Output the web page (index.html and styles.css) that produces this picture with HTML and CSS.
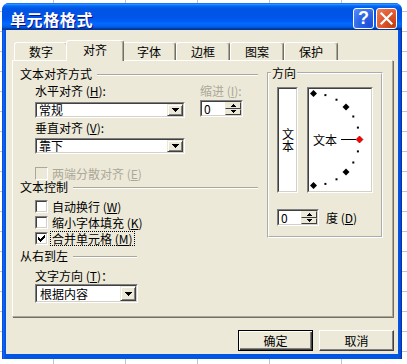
FILE: index.html
```html
<!DOCTYPE html>
<html lang="zh-CN">
<head>
<meta charset="utf-8">
<title>单元格格式</title>
<link rel="stylesheet" href="styles.css">
</head>
<body>
<div class="window">
  <div class="titlebar">
    <span class="title">单元格格式</span>
    <div class="tbtns">
      <div class="tbtn help">?</div>
      <div class="tbtn close">
        <svg width="19" height="19" viewBox="0 0 19 19"><path d="M4.5 4.5L14.5 14.5M14.5 4.5L4.5 14.5" stroke="#fff" stroke-width="2.2" stroke-linecap="square"/></svg>
      </div>
    </div>
  </div>
  <div class="frame">
    <div class="client">
      <div class="tabs">
        <div class="tab">数字</div>
        <div class="tab sel">对齐</div>
        <div class="tab">字体</div>
        <div class="tab">边框</div>
        <div class="tab">图案</div>
        <div class="tab">保护</div>
      </div>
      <div class="panel">
        <div class="leftcol">
          <div class="sechead"><span>文本对齐方式</span><i class="rule"></i></div>
          <div class="alignrow">
            <div class="acol">
              <div class="lbl">水平对齐 (<u>H</u>):</div>
              <div class="sunk combo">
                <div class="in"><span class="val">常规</span><span class="ddbtn"><svg width="7" height="4" viewBox="0 0 7 4"><path d="M0 0h7v1h-1v1h-1v1h-1v1h-1v-1h-1v-1h-1v-1h-1z"/></svg></span></div>
              </div>
              <div class="lbl mt3">垂直对齐 (<u>V</u>):</div>
              <div class="sunk combo mt3b">
                <div class="in"><span class="val">靠下</span><span class="ddbtn"><svg width="7" height="4" viewBox="0 0 7 4"><path d="M0 0h7v1h-1v1h-1v1h-1v1h-1v-1h-1v-1h-1v-1h-1z"/></svg></span></div>
              </div>
            </div>
            <div class="indcol">
              <div class="lbl dis">缩进 (<u>I</u>):</div>
              <div class="sunk spin ind-spin">
                <div class="in"><span class="val">0</span>
                  <span class="spbtns">
                    <span class="spb"><svg width="5" height="3" viewBox="0 0 5 3"><path d="M2 0h1v1h1v1h1v1h-5v-1h1v-1h1z"/></svg></span>
                    <span class="spb"><svg width="5" height="3" viewBox="0 0 5 3"><path d="M0 0h5v1h-1v1h-1v1h-1v-1h-1v-1h-1z"/></svg></span>
                  </span>
                </div>
              </div>
            </div>
          </div>
          <div class="chk chk-dis">
            <span class="sunk cb"><span class="in"></span></span>
            <span class="clbl">两端分散对齐 (<u>E</u>)</span>
          </div>
          <div class="sechead"><span>文本控制</span><i class="rule"></i></div>
          <div class="chk chk-first">
            <span class="sunk cb"><span class="in"></span></span>
            <span class="clbl">自动换行 (<u>W</u>)</span>
          </div>
          <div class="chk">
            <span class="sunk cb"><span class="in"></span></span>
            <span class="clbl">缩小字体填充 (<u>K</u>)</span>
          </div>
          <div class="chk">
            <span class="sunk cb"><span class="in"><svg width="7" height="7" viewBox="0 0 7 7"><path d="M0 2h1v1h1v1h1v-1h1v-1h1v-1h1v-1h1v3h-1v1h-1v1h-1v1h-1v1h-1v-1h-1v-1h-1z"/></svg></span></span>
            <span class="clbl focus">合并单元格 (<u>M</u>)</span>
          </div>
          <div class="sechead short mt2"><span>从右到左</span><i class="rule"></i></div>
          <div class="lbl ind mt6">文字方向 (<u>T</u>)：</div>
          <div class="sunk combo tall ind mt1">
            <div class="in"><span class="val">根据内容</span><span class="ddbtn"><svg width="7" height="4" viewBox="0 0 7 4"><path d="M0 0h7v1h-1v1h-1v1h-1v1h-1v-1h-1v-1h-1v-1h-1z"/></svg></span></div>
          </div>
        </div>
        <fieldset class="dir">
          <legend>方向</legend>
          <div class="dirboxes">
            <div class="sunk vbox"><div class="in"><span class="vtext">文本</span></div></div>
            <div class="sunk dialbox">
              <div class="in">
                <svg width="62" height="102" viewBox="0 0 62 102">
                  <text x="4" y="56" class="dialtext">文本</text>
                  <rect x="32" y="50" width="15" height="1" fill="#000"/>
                  <g fill="#000">
                    <rect x="15.4" y="5.1" width="2" height="2"/>
                    <rect x="26.5" y="9.7" width="2" height="2"/>
                    <rect x="43.3" y="26.5" width="2" height="2"/>
                    <rect x="47.9" y="37.6" width="2" height="2"/>
                    <rect x="47.9" y="61.4" width="2" height="2"/>
                    <rect x="43.3" y="72.5" width="2" height="2"/>
                    <rect x="26.5" y="89.3" width="2" height="2"/>
                    <rect x="15.4" y="93.9" width="2" height="2"/>
                    <path d="M4.5 1L8 4.5L4.5 8L1 4.5Z"/>
                    <path d="M37 14.5L40.5 18L37 21.5L33.5 18Z"/>
                    <path d="M37 79.5L40.5 83L37 86.5L33.5 83Z"/>
                    <path d="M4.5 93L8 96.5L4.5 100L1 96.5Z"/>
                  </g>
                  <path d="M50.5 47L54 50.5L50.5 54L47 50.5Z" fill="#F00" stroke="#700" stroke-width="0.6"/>
                </svg>
              </div>
            </div>
          </div>
          <div class="degrow">
            <div class="sunk spin deg-spin">
              <div class="in"><span class="val">0</span>
                <span class="spbtns">
                  <span class="spb"><svg width="5" height="3" viewBox="0 0 5 3"><path d="M2 0h1v1h1v1h1v1h-5v-1h1v-1h1z"/></svg></span>
                  <span class="spb"><svg width="5" height="3" viewBox="0 0 5 3"><path d="M0 0h5v1h-1v1h-1v1h-1v-1h-1v-1h-1z"/></svg></span>
                </span>
              </div>
            </div>
            <span class="deg">度 (<u>D</u>)</span>
          </div>
        </fieldset>
      </div>
      <div class="btnrow">
        <div class="btn def">确定</div>
        <div class="btn">取消</div>
      </div>
    </div>
  </div>
</div>
</body>
</html>
```
FILE: styles.css
```css
* { box-sizing: border-box; }
html, body { margin: 0; height: 100%; }
body {
  background-color: #fff;
  background-image:
    linear-gradient(to right, #C4C4C4 1px, transparent 1px),
    linear-gradient(to bottom, #C4C4C4 1px, transparent 1px);
  background-size: 72px 100%, 100% 20px;
  background-position: 53px 0, 0 11px;
  font-family: "Noto Sans CJK SC", "Noto Sans", sans-serif;
  font-size: 12px;
  color: #000;
  overflow: hidden;
  padding: 3px 0 0 2px;
}
u { text-decoration: underline; text-underline-offset: 1px; }

.window {
  width: 400px;
  height: 356px;
  display: flex;
  flex-direction: column;
  background: #0055E5;
  border-radius: 7px 7px 0 0;
  overflow: hidden;
}
.titlebar {
  height: 27px;
  flex: none;
  display: flex;
  align-items: flex-start;
  padding: 0 5px 0 8px;
  background: linear-gradient(to bottom, #0058EE 0%, #3593FF 4%, #288EFF 6%, #127DFF 8%, #036FFC 10%, #0262EE 14%, #0057E5 20%, #0054E3 24%, #0055EB 56%, #005BF5 66%, #026AFE 76%, #0062EF 86%, #0052D6 92%, #0040AB 94%, #003092 100%);
}
.title {
  flex: 1;
  color: #fff;
  font-weight: 700;
  font-size: 16px;
  letter-spacing: 0.6px;
  line-height: 20px;
  margin-top: 6px;
  text-shadow: 1px 1px #0F1089;
}
.tbtns { display: flex; gap: 2px; margin-top: 5px; }
.tbtn {
  width: 21px;
  height: 21px;
  border: 1px solid #fff;
  border-radius: 3px;
  display: flex;
  align-items: center;
  justify-content: center;
}
.help {
  background: radial-gradient(circle at 85% 85%, #1F4FD8 0%, #2C65E6 50%, #5B8EF5 100%);
  color: #fff;
  font: bold 18px/19px "Liberation Sans", sans-serif;
}
.close {
  background: radial-gradient(circle at 85% 85%, #C23E10 0%, #E0572C 50%, #EC8060 100%);
}

.frame {
  flex: 1;
  display: flex;
  padding: 0 4px 5px 4px;
  background: linear-gradient(to right, #0831D9 0, #166AEE 1px, #0055E5 3px, #0055E5 calc(100% - 3px), #0843C8 calc(100% - 1px), #001EA0 100%);
}
.client {
  flex: 1;
  background: #ECE9D8;
  padding: 10px 5px 0 6px;
  display: flex;
  flex-direction: column;
}

.tabs {
  display: flex;
  align-items: flex-end;
  height: 20px;
  padding-left: 2px;
  position: relative;
  z-index: 1;
}
.tab {
  width: 54px;
  height: 18px;
  border: 1px solid;
  border-color: #fff #716F64 transparent #fff;
  border-bottom: 0;
  border-radius: 3px 3px 0 0;
  box-shadow: inset -1px 0 #ACA899;
  background: #ECE9D8;
  display: flex;
  align-items: center;
  justify-content: center;
  line-height: 14px;
}
.tab.sel {
  width: 58px;
  height: 21px;
  margin: 0 -2px -1px;
  position: relative;
  z-index: 2;
  padding-bottom: 2px;
}

.panel {
  height: 257px;
  flex: none;
  border: 1px solid;
  border-color: #fff #ACA899 #ACA899 #fff;
  box-shadow: 1px 1px 0 #716F64;
  padding: 6px 0 0 7px;
  display: flex;
  gap: 9px;
  align-items: flex-start;
}
.leftcol {
  width: 238px;
  display: flex;
  flex-direction: column;
}
.sechead {
  display: flex;
  align-items: center;
  height: 14px;
  line-height: 14px;
  white-space: nowrap;
}
.sechead.short { width: 117px; }
.rule {
  flex: 1;
  height: 2px;
  border-top: 1px solid #ACA899;
  border-bottom: 1px solid #fff;
  margin: 1px 0 0 5px;
}
.lbl { height: 14px; line-height: 14px; white-space: nowrap; }
.dis { color: #ACA899; }
.ind { margin-left: 15px; }
.mt1 { margin-top: 1px; }
.mt2 { margin-top: 2px; }
.mt3 { margin-top: 3px; }
.mt6 { margin-top: 6px; }

.alignrow { display: flex; margin-top: 3px; }
.acol { width: 150px; margin-left: 15px; display: flex; flex-direction: column; }
.acol .combo { margin-top: 4px; }
.acol .combo.mt3b { margin-top: 3px; }
.indcol { margin-left: 15px; display: flex; flex-direction: column; }

.sunk {
  border: 1px solid;
  border-color: #808080 #fff #fff #808080;
}
.sunk > .in {
  height: 100%;
  border: 1px solid;
  border-color: #404040 #D4D0C8 #D4D0C8 #404040;
  background: #fff;
}
.combo { height: 16px; width: 150px; }
.combo.tall { height: 19px; width: 103px; }
.combo > .in, .spin > .in { display: flex; align-items: stretch; }
.val { flex: 1; padding-left: 2px; line-height: 12px; display: flex; align-items: center; }
.combo.tall .val { padding-left: 3px; }
.ddbtn {
  width: 16px;
  flex: none;
  border: 1px solid;
  border-color: #ECE9D8 #404040 #404040 #ECE9D8;
  box-shadow: inset 1px 1px #fff, inset -1px -1px #808080;
  background: #ECE9D8;
  display: flex;
  align-items: center;
  justify-content: center;
}
.spin { height: 17px; }
.ind-spin { width: 43px; margin-top: 2px; }
.deg-spin { width: 42px; }
.spbtns { width: 16px; flex: none; display: flex; flex-direction: column; }
.spb {
  flex: 1;
  border: 1px solid;
  border-color: #ECE9D8 #404040 #404040 #ECE9D8;
  background: #ECE9D8;
  display: flex;
  align-items: center;
  justify-content: center;
}

.chk {
  display: flex;
  align-items: flex-start;
  height: 16px;
  margin-left: 15px;
}
.chk-dis { height: 13px; margin-top: 13px; color: #ACA899; }
.chk-first { margin-top: 5px; }
.cb { width: 13px; height: 13px; flex: none; margin-top: 1px; }
.chk-dis .cb { margin-top: 0; border-color: #ACA899 #fff #fff #ACA899; }
.chk-dis .cb > .in { background: #ECE9D8; border-color: #ECE9D8; }
.cb > .in { display: flex; align-items: center; justify-content: center; }
.clbl { margin-left: 4px; line-height: 13px; white-space: nowrap; margin-top: 1px; }
.chk-dis .clbl { margin-top: 0; }
.clbl.focus {
  outline: 1px dotted #000;
  outline-offset: 0;
  padding: 0 1px;
  margin-left: 3px;
}

.dir {
  margin: -1px 0 0 0;
  padding: 7px 8px 10px 8px;
  border: 2px groove #fff;
  width: 116px;
  min-inline-size: 0;
}
.dir legend {
  padding: 0 1px;
  margin-left: -6px;
  line-height: 14px;
  height: 14px;
}
.dirboxes { display: flex; gap: 9px; }
.vbox { width: 21px; height: 106px; }
.vbox > .in {
  display: flex;
  align-items: center;
  justify-content: center;
}
.vtext {
  writing-mode: vertical-rl;
  text-orientation: upright;
  line-height: 12px;
}
.dialbox { width: 66px; height: 106px; }
.dialbox > .in svg { display: block; }
.dialtext { font-family: "Noto Sans CJK SC", sans-serif; font-size: 12px; fill: #000; }
.degrow { display: flex; align-items: center; margin-top: 16px; }
.deg { margin-left: 7px; line-height: 14px; }

.btnrow {
  display: flex;
  justify-content: flex-end;
  gap: 6px;
  margin-top: 13px;
  margin-right: -1px;
}
.btn {
  width: 75px;
  height: 21px;
  border: 1px solid;
  border-color: #fff #404040 #404040 #fff;
  box-shadow: inset -1px -1px #808080;
  background: #ECE9D8;
  display: flex;
  align-items: center;
  justify-content: center;
  line-height: 14px;
}
.btn.def {
  border-color: #000;
  box-shadow: inset 1px 1px #fff, inset -1px -1px #404040, inset -2px -2px #808080;
}
```
